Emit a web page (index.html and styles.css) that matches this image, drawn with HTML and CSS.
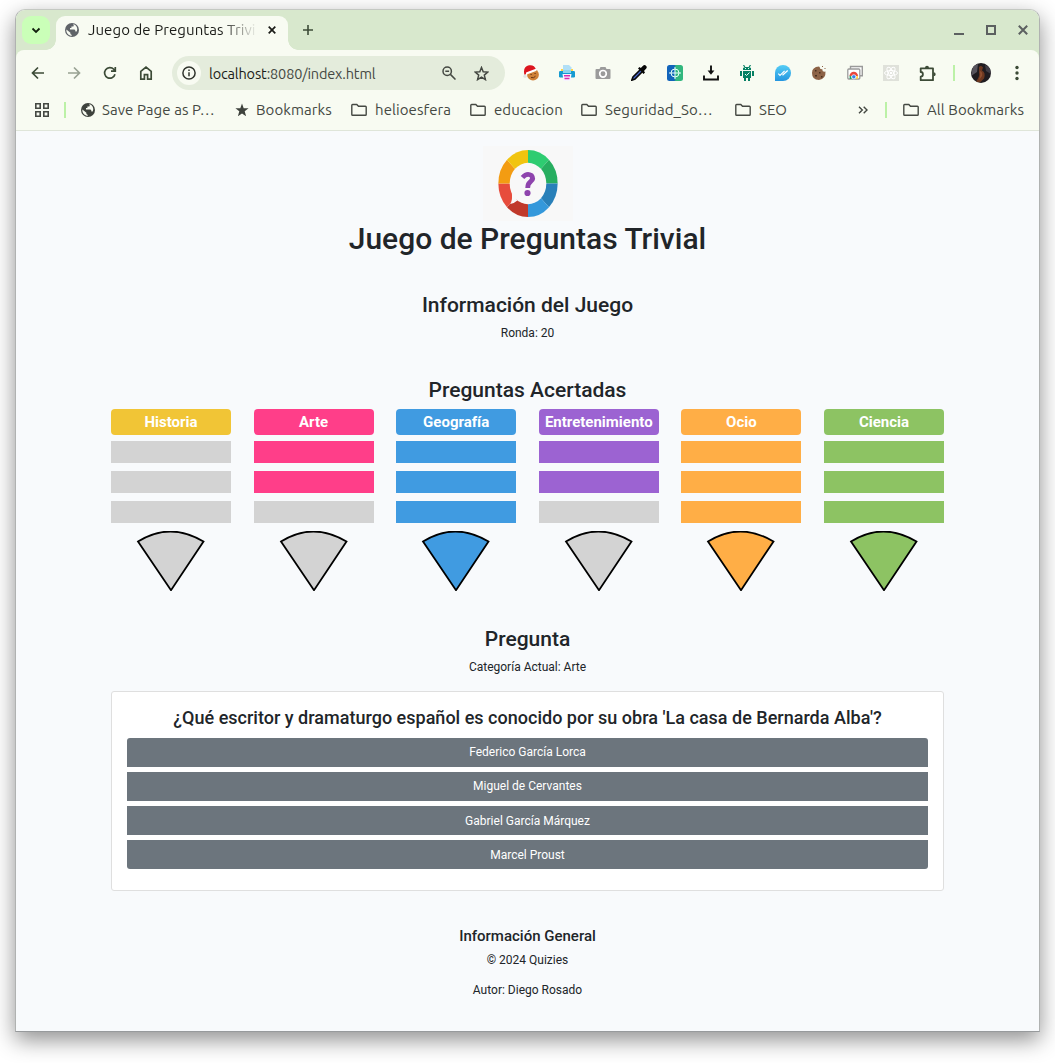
FILE: index.html
```html
<!DOCTYPE html>
<html lang="es">
<head>
<meta charset="utf-8">
<title>Juego de Preguntas Trivial</title>
<link rel="stylesheet" href="styles.css">
</head>
<body>
<svg class="defs" width="0" height="0">
  <symbol id="globe" viewBox="0 0 14 14"><circle cx="7" cy="7" r="7" fill="currentColor"/><path d="M8 1.2C9 2 9 3 8 3.600H6.400V5H5v1.600h4.200c1 0 1.200 1 1.200 2h1.300c1.200-2.500.4-5-1.200-6.300C9.700 1.700 9 1.300 8 1.200zM1.400 6.500l4 3.200v1.200l1.400 1v.9C3.800 12.700.9 10 1.400 6.500z" fill="#f8fbf2"/></symbol>
  <symbol id="folder" viewBox="0 0 16 14"><path d="M.8 11.500V2.300q0-.8.8-.8h4.200l1.700 1.800h6.900q.8 0 .8.8v7.400q0 .8-.8.8H1.600q-.8 0-.8-.8z" fill="none" stroke="#454943" stroke-width="1.400"/></symbol>
  <symbol id="wedge" viewBox="0 0 70 60"><path d="M2 10.500Q34-9.500 67.500 10.500L35 59.200z"/></symbol>
</svg>
<div class="window">
  <header class="tabstrip">
    <div class="tab-search"><svg width="10" height="7" viewBox="0 0 10 7"><path d="M1.500 1.500L5 5l3.500-3.500" fill="none" stroke="#121f0e" stroke-width="1.800"/></svg></div>
    <div class="tab">
      <svg class="tab-globe" width="14" height="14"><use href="#globe"/></svg>
      <span class="tab-title">Juego de Preguntas Trivial</span>
      <svg class="tab-close" width="8" height="8" viewBox="0 0 8 8"><path d="M.7.700l6.600 6.600M7.300.700L.7 7.300" stroke="#1b1c18" stroke-width="1.700"/></svg>
    </div>
    <svg class="new-tab" width="10" height="10" viewBox="0 0 10 10"><path d="M5 0v10M0 5h10" stroke="#3c4b37" stroke-width="1.600"/></svg>
    <div class="window-buttons">
      <svg width="10" height="10" viewBox="0 0 10 10"><path d="M0 9h10" stroke="#5c6060" stroke-width="2"/></svg>
      <svg width="10" height="10" viewBox="0 0 10 10"><rect x="1" y="1" width="8" height="8" fill="none" stroke="#5c6060" stroke-width="2"/></svg>
      <svg width="10" height="10" viewBox="0 0 10 10"><path d="M.8.800l8.400 8.400M9.200.800L.8 9.200" stroke="#5c6060" stroke-width="2"/></svg>
    </div>
  </header>
  <div class="toolbar-wrap">
  <div class="toolbar">
    <div class="tool"><svg width="14" height="14" viewBox="0 0 14 14"><path d="M13 7H2M7 1.500L1.500 7 7 12.500" class="line"/></svg></div>
    <div class="tool dim"><svg width="14" height="14" viewBox="0 0 14 14"><path d="M1 7h11M7 1.500L12.500 7 7 12.500" class="line"/></svg></div>
    <div class="tool"><svg width="14" height="14" viewBox="0 0 14 14"><path d="M12 8.300A5.300 5.300 0 1 1 10.800 3.300L12.500 5M12.300 1v4.200H8" class="line"/></svg></div>
    <div class="tool"><svg width="14" height="14" viewBox="0 0 14 14"><path d="M1.800 13.200V5.300L7 1.100l5.200 4.200v7.900H8.600V8.600H5.400v4.600z" class="line"/></svg></div>
    <div class="omnibox">
      <span class="site-info"><svg width="14" height="14" viewBox="0 0 14 14"><circle cx="7" cy="7" r="6.100" fill="none" stroke="#30342d" stroke-width="1.500"/><path d="M7 6.300v4M7 3.600v1.500" stroke="#30342d" stroke-width="1.500"/></svg></span>
      <span class="url">localhost<span>:8080/index.html</span></span>
      <svg class="zoom-icon" width="14" height="14" viewBox="0 0 14 14"><circle cx="5.200" cy="5.200" r="4.200" class="omni-line"/><path d="M8.400 8.400l5.100 5.100M3.300 5.200h3.800" class="omni-line"/></svg>
      <svg width="15" height="15" viewBox="0 0 15 15"><path d="M7.500 1.500l1.700 4.300 4.600.3-3.500 3 1.100 4.500-3.900-2.500-3.900 2.500 1.100-4.500-3.500-3 4.600-.3z" class="omni-line"/></svg>
    </div>
    <div class="extensions">
      <div class="tool"><svg width="16" height="16" viewBox="0 0 16 16"><circle cx="10" cy="9.700" r="5.900" fill="#cf8138"/><path d="M1.500 10C0 4 2 1 6 .3c3.500-.6 6 1 7 4L4 8.500z" fill="#dc151f"/><path d="M4 8.300L12.600 5" stroke="#fff" stroke-width="2.200" stroke-linecap="round"/><circle cx="2" cy="11.300" r="1.700" fill="#e4e4e4"/><path d="M7.500 9.500h1.200M11.500 8.500h1.200M8 12.500q3 1 4.500-1.300" stroke="#6b3513" fill="none"/></svg></div>
      <div class="tool"><svg width="16" height="16" viewBox="0 0 16 16"><path d="M4 0h6l2.500 2.500V7H4z" fill="#b1dff6"/><path d="M2 4h2v3H2zM12 4h2v3h-2z" fill="#ffd447"/><rect y="6" width="16" height="6.500" rx="1.200" fill="#159bd1"/><path d="M4 5h8v3H4z" fill="#8ed5ef"/><path d="M3.500 9h9l-1 7h-7z" fill="#f7f5ff"/><path d="M5 10.800h6M5.500 13.500h5" stroke="#dc2ab0" stroke-width="1.500"/></svg></div>
      <div class="tool"><svg width="16" height="16" viewBox="0 0 16 16"><path d="M5.500 2h5l1 2h3q1 0 1 1v8q0 1-1 1h-13q-1 0-1-1V5q0-1 1-1h3z" fill="#9b9b9b"/><circle cx="8" cy="8.800" r="3.300" fill="none" stroke="#fff" stroke-width="1.700"/></svg></div>
      <div class="tool"><svg width="16" height="16" viewBox="0 0 16 16"><path d="M9 5L2 12 .8 15.200 4 14l7-7" fill="#4866ca" stroke="#080808" stroke-width="1.600"/><path d="M7 3.500l1.500-1.500 1.300 1L12 .8q1.500-1.500 3 0t0 3L13 6l1 1.500L12.500 9z" fill="#070707"/></svg></div>
      <div class="tool"><svg width="16" height="16" viewBox="0 0 16 16"><defs><linearGradient id="aim" x2="1"><stop offset=".45" stop-color="#1264bb"/><stop offset=".55" stop-color="#32b77e"/></linearGradient></defs><rect width="16" height="16" rx="2.500" fill="url(#aim)"/><circle cx="8" cy="8" r="4" fill="none" stroke="#e5fff8"/><path d="M8 2v12M2 8h12" stroke="#e5fff8"/></svg></div>
      <div class="tool"><svg width="16" height="16" viewBox="0 0 16 16"><path d="M1 10.500v4h14v-4M8 .5v6" fill="none" stroke="#111" stroke-width="1.900"/><path d="M4.600 5.500h6.800L8 9.800z" fill="#111"/></svg></div>
      <div class="tool"><svg width="16" height="16" viewBox="0 0 16 16"><path d="M4.500 0l1.300 2M11.500 0l-1.300 2" stroke="#078064" stroke-width="1.200"/><path d="M4 5V3l2-1h4l2 1v2zM4 6h8v7H4zM1 6h2v5H1zM13 6h2v5h-2zM5 12h2v4H5zM9 12h2v4H9z" fill="#078064"/><path d="M6 3.500h1M9 3.500h1M6 9l1.500 1.500L10.500 7.500" fill="none" stroke="#e4fff5"/></svg></div>
      <div class="tool"><svg width="16" height="16" viewBox="0 0 16 16"><defs><linearGradient id="chat" y2="1" x2="0"><stop stop-color="#55cdf5"/><stop offset="1" stop-color="#2496e0"/></linearGradient></defs><path d="M8 0a8 8 0 1 1 0 16H0V8a8 8 0 0 1 8-8z" fill="url(#chat)"/><path d="M3.300 8.700L5 10.400 9.600 5.800M7.500 10.300L12.700 5.500" fill="none" stroke="#fff" stroke-width="1.200"/></svg></div>
      <div class="tool"><svg width="16" height="16" viewBox="0 0 16 16"><path d="M8 1.500q1 .5 1 2 1 1 2 .5 1 1 .5 2 1.500 1 3 .5Q15 14 8 15 1 15 1 8 1 2 8 1.500z" fill="#8c6246"/><path d="M4 5h1.500v1.500H4zM8 7h1.500v1.500H8zM4 10h2v1.500H4zM10 11h1.500v1.500H10z" fill="#49301f"/><path d="M11 1h1v1h-1zM13.500 3h1v1h-1z" fill="#8c6246"/></svg></div>
      <div class="tool"><svg width="16" height="16" viewBox="0 0 16 16"><path d="M3.500 4V1.500h11.800v9.200H13" fill="#fff" stroke="#9a9a9a" stroke-width="1.400"/><rect x=".8" y="4" width="12" height="10" rx="1" fill="#fff" stroke="#9a9a9a" stroke-width="1.300"/><path d="M2.500 11a4.300 4.300 0 0 1 8.600 0z" fill="#e9473d"/><path d="M2.500 10.500l2 1v2.500H2.800z" fill="#18a55f"/><path d="M11.100 10.500l-2 1v2.500h1.700z" fill="#ffd342"/><circle cx="6.800" cy="11.800" r="2.100" fill="#3182ee" stroke="#fff" stroke-width=".7"/></svg></div>
      <div class="tool"><svg width="16" height="16" viewBox="0 0 16 16"><path d="M0 0h16v16H0z" fill="#dfe1da"/><g fill="none" stroke="#fff"><ellipse cx="8" cy="8" rx="6.500" ry="2.500"/><ellipse cx="8" cy="8" rx="6.500" ry="2.500" transform="rotate(60 8 8)"/><ellipse cx="8" cy="8" rx="6.500" ry="2.500" transform="rotate(120 8 8)"/></g><circle cx="8" cy="8" r="1.300" fill="#fff"/></svg></div>
      <div class="tool"><svg width="17" height="17" viewBox="0 0 17 17"><path d="M1.700 3.300H14v11.900H1.700v-3.600q2.200 0 2.200-2.300T1.700 7z" fill="none" stroke="#3d4b37" stroke-width="1.800" stroke-linejoin="round"/><path d="M6 3q0-2.300 2-2.300T10 3zM14.500 7.300q2.200 0 2.200 2t-2.200 2z" fill="#3d4b37"/></svg></div>
    </div>
    <i class="divider"></i>
    <svg class="avatar" width="20" height="20" viewBox="0 0 20 20"><defs><clipPath id="face"><circle cx="10" cy="10" r="10"/></clipPath></defs><g clip-path="url(#face)"><path d="M0 0h20v20H0z" fill="#1f1c20"/><path d="M2 3l5-2-1 8-6 4z" fill="#56535c"/><path d="M14 2l6 3v6l-5-3z" fill="#403d45"/><path d="M8 4q2-2 4 .5l-1 3q4 2 2 8l-4 4-4-1q4-5 3-9z" fill="#6d3820"/><path d="M9 8q3 1 2 5l-3 4q2-5 1-9z" fill="#914f2f"/></g></svg>
    <svg class="menu" width="4" height="16" viewBox="0 0 4 16"><circle cx="2" cy="2.500" r="1.700"/><circle cx="2" cy="8" r="1.700"/><circle cx="2" cy="13.500" r="1.700"/></svg>
  </div>
  </div>
  <nav class="bookmarks">
    <svg class="apps" width="14" height="14" viewBox="0 0 14 14"><path d="M.8.800h4.400v4.400H.8zM8.800.800h4.400v4.400H8.800zM.8 8.800h4.400v4.400H.8zM8.800 8.800h4.400v4.400H8.800z" fill="none" stroke="#454943" stroke-width="1.600"/></svg>
    <i class="divider"></i>
    <div class="bookmark save"><svg width="14" height="14"><use href="#globe"/></svg><span>Save Page as P…</span></div>
    <div class="bookmark starred"><svg width="14" height="14" viewBox="0 0 14 14"><path d="M7 .5l1.700 4.700 4.900.1-3.900 3 1.400 4.900L7 10.400l-4.100 2.800 1.400-4.900-3.900-3 4.900-.1z" fill="#3e423d"/></svg><span>Bookmarks</span></div>
    <div class="bookmark folder helio"><svg width="16" height="14"><use href="#folder"/></svg><span>helioesfera</span></div>
    <div class="bookmark folder edu"><svg width="16" height="14"><use href="#folder"/></svg><span>educacion</span></div>
    <div class="bookmark folder seg"><svg width="16" height="14"><use href="#folder"/></svg><span>Seguridad_So…</span></div>
    <div class="bookmark folder seo"><svg width="16" height="14"><use href="#folder"/></svg><span>SEO</span></div>
    <svg class="more" width="10" height="8" viewBox="0 0 10 8"><path d="M1 .7L4.300 4 1 7.300M5.700.7L9 4 5.700 7.300" fill="none" stroke="#454943" stroke-width="1.400"/></svg>
    <i class="divider"></i>
    <div class="bookmark folder all"><svg width="16" height="14"><use href="#folder"/></svg><span>All Bookmarks</span></div>
  </nav>
  <main class="page">
    <div class="logo"><svg width="90" height="75" viewBox="0 0 90 75">
      <g transform="translate(45 37.500) scale(.885 1)">
        <path d="M0 0V-33.500A33.500 33.500 0 0 1 23.700-23.700z" fill="#2ecc71"/><path d="M0 0L23.700-23.700A33.500 33.500 0 0 1 33.500 0z" fill="#27ae60"/>
        <path d="M0 0H33.500A33.500 33.500 0 0 1 23.700 23.700z" fill="#2980b9"/><path d="M0 0L23.700 23.700A33.500 33.500 0 0 1 0 33.500z" fill="#3498db"/>
        <path d="M0 0V33.500A33.500 33.500 0 0 1-23.700 23.700z" fill="#c0392b"/><path d="M0 0L-23.700 23.700A33.500 33.500 0 0 1-33.500 0z" fill="#e74c3c"/>
        <path d="M0 0H-33.500A33.500 33.500 0 0 1-23.700-23.700z" fill="#f39c12"/><path d="M0 0L-23.700-23.700A33.500 33.500 0 0 1 0-33.500z" fill="#f1c40f"/>
        <circle r="20.700" fill="#f8f8f8"/><path d="M-18.500 8Q-17 16-20 20.500q5-1 8-3.500z" fill="#f8f8f8"/>
      </g>
      <path d="M39.500 31.500q4.500-5 9-2 2.600 3.200-.8 6-3.100 2.200-3 6.500" fill="none" stroke="#8e44ad" stroke-width="4.800"/><circle cx="44.500" cy="47" r="3.100" fill="#8e44ad"/>
    </svg></div>
    <h1>Juego de Preguntas Trivial</h1>
    <section class="info"><h2>Información del Juego</h2><p>Ronda: 20</p></section>
    <section class="score">
      <h2>Preguntas Acertadas</h2>
      <div class="categories">
        <div class="category historia n0"><h3>Historia</h3><i></i><i></i><i></i><svg class="wedge"><use href="#wedge"/></svg></div>
        <div class="category arte n2"><h3>Arte</h3><i></i><i></i><i></i><svg class="wedge"><use href="#wedge"/></svg></div>
        <div class="category geografia n3"><h3>Geografía</h3><i></i><i></i><i></i><svg class="wedge"><use href="#wedge"/></svg></div>
        <div class="category entretenimiento n2"><h3>Entretenimiento</h3><i></i><i></i><i></i><svg class="wedge"><use href="#wedge"/></svg></div>
        <div class="category ocio n3"><h3>Ocio</h3><i></i><i></i><i></i><svg class="wedge"><use href="#wedge"/></svg></div>
        <div class="category ciencia n3"><h3>Ciencia</h3><i></i><i></i><i></i><svg class="wedge"><use href="#wedge"/></svg></div>
      </div>
    </section>
    <section class="question">
      <h2>Pregunta</h2><p>Categoría Actual: Arte</p>
      <div class="card">
        <h4>¿Qué escritor y dramaturgo español es conocido por su obra 'La casa de Bernarda Alba'?</h4>
        <div class="answers"><button>Federico García Lorca</button><button>Miguel de Cervantes</button><button>Gabriel García Márquez</button><button>Marcel Proust</button></div>
      </div>
    </section>
    <footer><h5>Información General</h5><p>© 2024 Quizies</p><p>Autor: Diego Rosado</p></footer>
  </main>
</div>
</body>
</html>
```
FILE: styles.css
```css
* { box-sizing: border-box; }
body { margin: 0; height: 1063px; padding: 9px 15px 0; background: #fff; overflow: hidden; }
h1, h2, h3, h4, h5, p { margin: 0; font-weight: 500; }
svg { display: block; flex: none; }
.defs { position: absolute; }
.window { width: 1025px; height: 1023px; border: 1px solid #b0b2b1; border-top-color: #c4c8c2; border-bottom-color: #979a9c; border-radius: 10px 10px 0 0; box-shadow: 0 8px 22px rgba(0,0,0,.44); overflow: hidden; background: #f8fafc; font-family: Ubuntu, "Noto Sans", sans-serif; font-size: 15px; }

/* Browser frame */
.tabstrip { height: 40px; background: #d8e8cd; display: flex; align-items: center; padding-left: 6px; }
.tab-search { width: 28px; height: 28px; border-radius: 9px; background: #caffb8; display: flex; align-items: center; justify-content: center; }
.tab { position: relative; align-self: flex-end; width: 232px; height: 34px; margin-left: 6px; padding: 0 12px 6px 9px; border-radius: 9px 9px 0 0; background: #f8fbf2; display: flex; align-items: center; color: #1b1c18; }
.tab::before, .tab::after { content: ""; position: absolute; bottom: 0; width: 10px; height: 10px; }
.tab::before { left: -10px; background: radial-gradient(circle at 0 0, transparent 9.500px, #f8fbf2 10px); }
.tab::after { right: -10px; background: radial-gradient(circle at 100% 0, transparent 9.500px, #f8fbf2 10px); }
.tab-globe { color: #5f6368; }
.tab-title { width: 168px; margin-left: 9px; overflow: hidden; white-space: nowrap; font-size: 15px; letter-spacing: .07px; line-height: 22px; mask-image: linear-gradient(90deg, #000 132px, transparent 170px); }
.tab-close { margin-left: auto; }
.new-tab { margin-left: 15px; }
.window-buttons { display: flex; gap: 22px; margin: 0 11px 0 auto; }
.toolbar-wrap { background: #d8e8cd; }
.toolbar { height: 46px; background: #f8fbf2; display: flex; align-items: center; padding-left: 4px; border-radius: 8px 8px 0 0; }
.tool { width: 36px; height: 28px; flex: none; display: flex; align-items: center; justify-content: center; }
.line { fill: none; stroke: #3c4b37; stroke-width: 1.700; }
.dim { opacity: .5; }
.omnibox { width: 333px; height: 34px; margin-left: 8px; border-radius: 17px; background: #e4ecdc; display: flex; align-items: center; padding: 0 16px 0 5px; }
.site-info { width: 24px; height: 24px; border-radius: 12px; background: #f8fbf2; display: flex; align-items: center; justify-content: center; }
.url { margin-left: 8px; color: #1b1c18; font-size: 14.500px; letter-spacing: -.15px; }
.url span { color: #454943; }
.zoom-icon { margin: 0 18px 0 auto; }
.omni-line { fill: none; stroke: #454943; stroke-width: 1.500; }
.extensions { display: flex; margin-left: 8px; }
.divider { width: 2px; height: 16px; background: #bcf1a7; flex: none; }
.toolbar .divider { margin-left: 8px; }
.avatar { margin-left: 16px; }
.menu { margin-left: 24px; fill: #3c4b37; }
.bookmarks { height: 35px; padding: 0 0 6px 19px; background: #f8fbf2; border-bottom: 1px solid #dfe5d9; display: flex; align-items: center; color: #454943; }
.apps + .divider { margin: 0 15px; }
.bookmark { display: flex; align-items: center; gap: 7px; flex: none; white-space: nowrap; font-size: 15px; letter-spacing: .07px; line-height: 20px; }
.bookmark svg { color: #3e423d; }
.folder { gap: 8px; }
.save { width: 154px; }
.starred { width: 116px; }
.helio { width: 119px; }
.edu { width: 111px; }
.seg { width: 154px; }
.seo { width: 123px; }
.more + .divider { margin: 0 16px 0 17px; }

/* Trivia page */
.page { height: 900px; padding: 15px 95px 0; background: #f8fafc; font-family: Roboto, sans-serif; color: #212529; text-align: center; }
.logo { width: 90px; height: 75px; margin: 0 auto; background: #f8f8f8; }
h1 { font-size: 30px; line-height: 36px; }
h2 { font-size: 21px; line-height: 25px; margin-bottom: 6px; }
p { font-size: 12px; line-height: 18px; font-weight: 400; }
.info { margin-top: 36px; }
.score { margin-top: 36px; }
.categories { display: flex; justify-content: space-between; }
.category { width: 120px; }
.category h3 { height: 26px; margin-bottom: 6px; border-radius: 4px; background: var(--color); color: #fff; font-size: 15px; line-height: 26px; font-weight: 700; }
.category i { display: block; height: 22px; margin-bottom: 8px; background: #d3d3d3; }
.n2 i:nth-of-type(-n+2), .n3 i { background: var(--color); }
.wedge { width: 70px; height: 60px; margin: 0 auto; fill: #d3d3d3; stroke: #000; stroke-width: 1.800; }
.n3 .wedge { fill: var(--color); }
.historia { --color: #f1c536; }
.arte { --color: #ff3e89; }
.geografia { --color: #409be1; }
.entretenimiento { --color: #9c63d2; }
.ocio { --color: #ffae46; }
.ciencia { --color: #8dc363; }
.question { margin-top: 36px; }
.card { height: 200px; margin-top: 15px; padding: 15px; border: 1px solid #dfdfdf; border-radius: 3px; background: #fff; }
h4 { font-size: 18px; line-height: 22px; margin-bottom: 9px; letter-spacing: .01px; }
.answers { display: grid; gap: 5px; }
button { height: 29px; padding: 0; border: 0; background: #6c757d; color: #fff; font: 12px/29px Roboto, sans-serif; }
button:nth-child(n+3) { padding-top: 1px; }
button:first-child { border-radius: 3px 3px 0 0; }
button:last-child { border-radius: 0 0 3px 3px; }
footer { margin-top: 36px; }
h5 { font-size: 15px; line-height: 18px; margin-bottom: 6px; }
footer p + p { margin-top: 12px; }
```
